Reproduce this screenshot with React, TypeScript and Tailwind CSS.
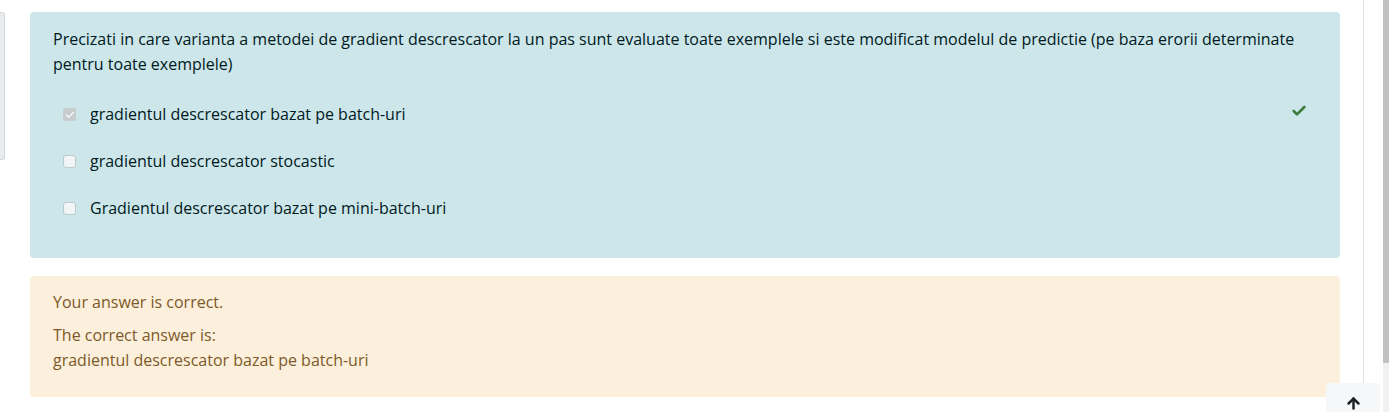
import { ArrowUp, Check } from 'lucide-react';

const options = [
  { label: 'gradientul descrescator bazat pe batch-uri', checked: true },
  { label: 'gradientul descrescator stocastic', checked: false },
  { label: 'Gradientul descrescator bazat pe mini-batch-uri', checked: false },
];

function OptionBox({ checked }: { checked: boolean }) {
  if (checked) {
    return (
      <span className="flex items-center justify-center w-[13px] h-[13px] rounded-[2px] bg-[#c8cccd]">
        <Check className="w-[10px] h-[10px] text-white" strokeWidth={3} />
      </span>
    );
  }
  return <span className="block w-[13px] h-[13px] rounded-[3px] border border-[#bccacc] bg-[#f2f5f5]" />;
}

export default function App() {
  return (
    <div className="relative h-[412px] w-[1389px] overflow-hidden bg-white font-['Open_Sans',sans-serif] text-[16px] leading-[25px]">
      <div className="flex h-full">
        {/* cut-off side block */}
        <div className="mt-[12px] h-[148px] w-[5px] rounded-r-[3px] border border-l-0 border-[#d4d7da] bg-[#e9ecef]" />

        <main className="flex w-[1335px] flex-col gap-[18px] pl-[25px] pt-[12px]">
          <div className="relative rounded-[4px] bg-[#cde6ea] px-[23px] pt-[15px] pb-[26px] text-[#001a1e]">
            <p>
              Precizati in care varianta a metodei de gradient descrescator la un pas sunt evaluate toate exemplele si este
              modificat modelul de predictie (pe baza erorii determinate pentru toate exemplele)
            </p>
            <div className="mt-[14px] flex flex-col">
              {options.map((o) => (
                <label key={o.label} className="flex h-[47px] items-center gap-[14px] pl-[10px]">
                  <OptionBox checked={o.checked} />
                  <span>{o.label}</span>
                </label>
              ))}
            </div>
            <Check className="absolute right-[33px] top-[91px] h-[16px] w-[16px] text-[#3c7d3f]" strokeWidth={4} />
          </div>

          <div className="rounded-[4px] bg-[#fcefdc] px-[23px] pt-[14px] pb-[24px] text-[#7d5a29]">
            <p>Your answer is correct.</p>
            <p className="mt-[8px]">The correct answer is:</p>
            <p>gradientul descrescator bazat pe batch-uri</p>
          </div>
        </main>

        <div className="ml-[23px] h-full w-px bg-[#dee2e6]" />
        <div className="flex-1" />
        <div className="flex h-full w-[6px] flex-col bg-[#f1f1f1]">
          <div className="h-[363px] bg-[#c1c1c1]" />
        </div>
      </div>

      <button className="absolute left-[1326px] top-[383px] flex h-[40px] w-[54px] justify-center rounded-t-[4px] bg-[#f5f7f9] pt-[12px]">
        <ArrowUp className="h-[17px] w-[17px] text-[#1d2125]" strokeWidth={3.5} />
      </button>
    </div>
  );
}
